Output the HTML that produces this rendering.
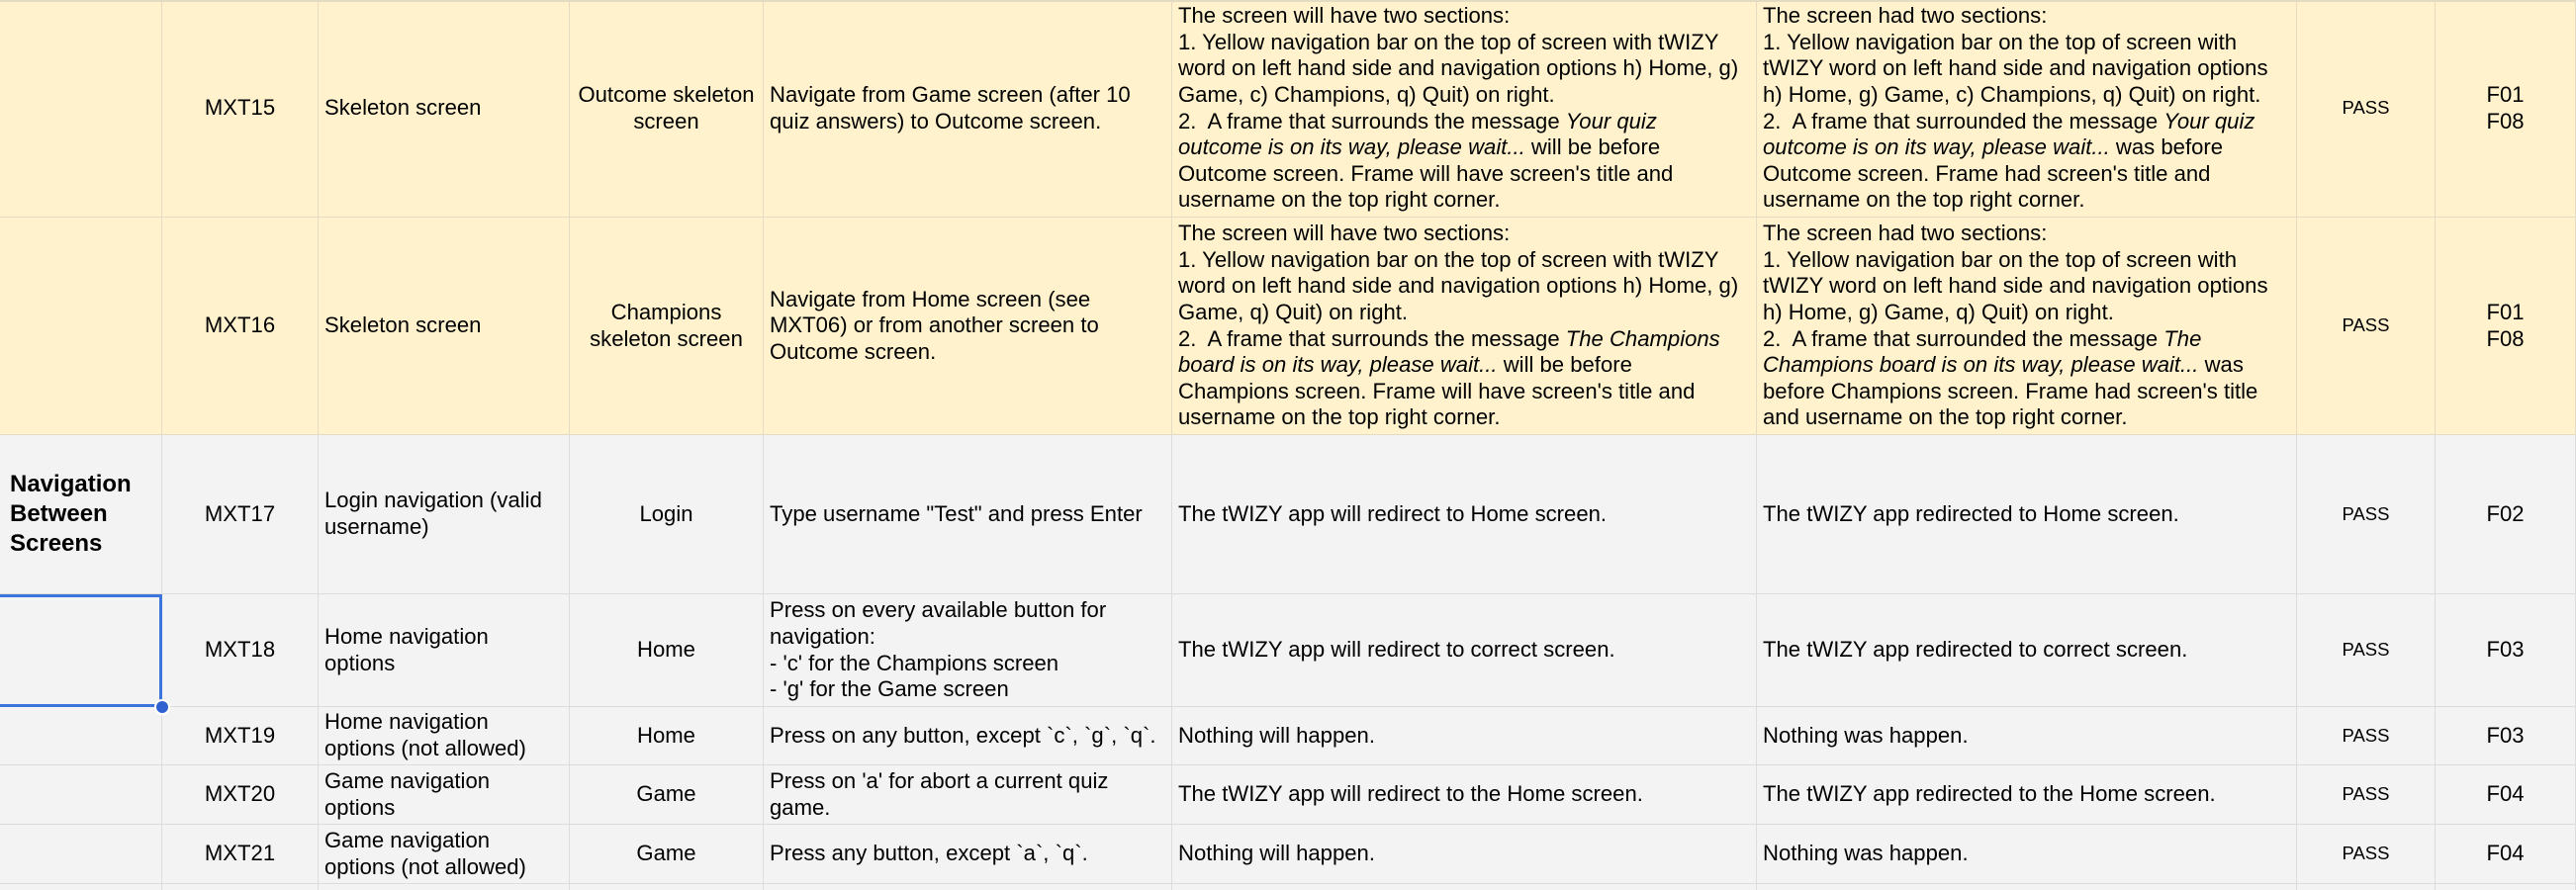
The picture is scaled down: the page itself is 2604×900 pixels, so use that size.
<!DOCTYPE html>
<html style="width:2604px;height:900px;overflow:hidden"><head><meta charset="utf-8"><style>
*{margin:0;padding:0;box-sizing:border-box}
body{position:relative;width:2604px;height:900px;overflow:hidden;background:#f3f3f3;font-family:"Liberation Sans",Arial,sans-serif;font-size:22.1px;line-height:26.6px;color:#000}
.c{position:absolute;display:flex;align-items:center;padding:0 6px;white-space:nowrap;overflow:hidden;border-right:1.5px solid #ddd;border-bottom:1.5px solid #ddd}
.y{background:#fff2cc;border-color:#e4dcc2}
.g{background:#f3f3f3;border-color:#dcdcdc}
.ctr{justify-content:center;text-align:center}
.p{font-size:18.5px}
.b{font-weight:bold;font-size:24px;line-height:30px}
</style></head><body>
<div id="t"></div>
<script>
const cols=[0,164,322,576,772,1185,1776,2322,2462,2604];
const rows=[[0,220,'y'],[220,440,'y'],[440,601,'g'],[601,715,'g'],[715,774,'g'],[774,834,'g'],[834,894,'g'],[894,900,'g']];
const data=[
['','MXT15','Skeleton screen','Outcome skeleton<br>screen','Navigate from Game screen (after 10<br>quiz answers) to Outcome screen.',
"The screen will have two sections:<br>1. Yellow navigation bar on the top of screen with tWIZY<br>word on left hand side and navigation options h) Home, g)<br>Game, c) Champions, q) Quit) on right.<br>2.&nbsp; A frame that surrounds the message <i>Your quiz</i><br><i>outcome is on its way, please wait...</i> will be before<br>Outcome screen. Frame will have screen's title and<br>username on the top right corner.",
"The screen had two sections:<br>1. Yellow navigation bar on the top of screen with<br>tWIZY word on left hand side and navigation options<br>h) Home, g) Game, c) Champions, q) Quit) on right.<br>2.&nbsp; A frame that surrounded the message <i>Your quiz</i><br><i>outcome is on its way, please wait...</i> was before<br>Outcome screen. Frame had screen's title and<br>username on the top right corner.",
'PASS','F01<br>F08'],
['','MXT16','Skeleton screen','Champions<br>skeleton screen','Navigate from Home screen (see<br>MXT06) or from another screen to<br>Outcome screen.',
"The screen will have two sections:<br>1. Yellow navigation bar on the top of screen with tWIZY<br>word on left hand side and navigation options h) Home, g)<br>Game, q) Quit) on right.<br>2.&nbsp; A frame that surrounds the message <i>The Champions</i><br><i>board is on its way, please wait...</i> will be before<br>Champions screen. Frame will have screen's title and<br>username on the top right corner.",
"The screen had two sections:<br>1. Yellow navigation bar on the top of screen with<br>tWIZY word on left hand side and navigation options<br>h) Home, g) Game, q) Quit) on right.<br>2.&nbsp; A frame that surrounded the message <i>The</i><br><i>Champions board is on its way, please wait...</i> was<br>before Champions screen. Frame had screen's title<br>and username on the top right corner.",
'PASS','F01<br>F08'],
['<span class="b">Navigation<br>Between<br>Screens</span>','MXT17','Login navigation (valid<br>username)','Login','Type username "Test" and press Enter','The tWIZY app will redirect to Home screen.','The tWIZY app redirected to Home screen.','PASS','F02'],
['','MXT18','Home navigation<br>options','Home',"Press on every available button for<br>navigation:<br>- 'c' for the Champions screen<br>- 'g' for the Game screen",'The tWIZY app will redirect to correct screen.','The tWIZY app redirected to correct screen.','PASS','F03'],
['','MXT19','Home navigation<br>options (not allowed)','Home','Press on any button, except `c`, `g`, `q`.','Nothing will happen.','Nothing was happen.','PASS','F03'],
['','MXT20','Game navigation<br>options','Game',"Press on 'a' for abort a current quiz<br>game.",'The tWIZY app will redirect to the Home screen.','The tWIZY app redirected to the Home screen.','PASS','F04'],
['','MXT21','Game navigation<br>options (not allowed)','Game','Press any button, except `a`, `q`.','Nothing will happen.','Nothing was happen.','PASS','F04'],
['','','','','','','','','']];
const ctr=[1,3,7,8];
let h='';
rows.forEach((r,i)=>{for(let j=0;j<9;j++){
 let cls='c '+r[2]+(ctr.includes(j)?' ctr':'')+(j==7?' p':'');
 let top=r[0],hh=r[1]-r[0];
 h+=`<div class="${cls}" style="left:${cols[j]}px;top:${top}px;width:${cols[j+1]-cols[j]}px;height:${hh}px;${j==0&&i<3?'padding-left:10px':''}${i==7?';border-bottom:0':''}"><div>${data[i][j]}</div></div>`;
}});
h+='<div style="position:absolute;left:0;top:0;width:2604px;height:2px;background:#e4dcc2"></div>';
h+='<div style="position:absolute;left:-4px;top:601px;width:168px;height:114px;border:3.5px solid #3a74dc"></div>';
h+='<div style="position:absolute;left:156px;top:707px;width:16px;height:16px;border-radius:50%;background:#2f62d0;border:2px solid #fff"></div>';
document.getElementById('t').innerHTML=h;
</script>
</body></html>
